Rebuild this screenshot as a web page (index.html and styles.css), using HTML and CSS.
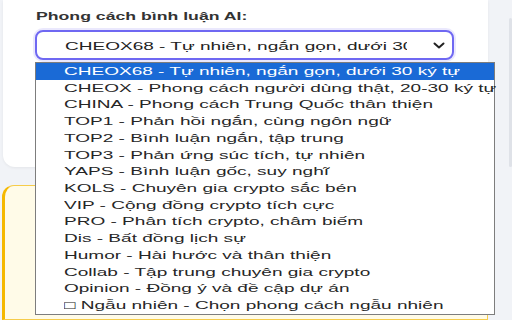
FILE: index.html
```html
<!DOCTYPE html>
<html lang="vi">
<head>
<meta charset="utf-8">
<link rel="stylesheet" href="styles.css">
</head>
<body>
<div class="page">
  <div class="main">
    <section class="card">
      <div class="label"><span class="t">Phong cách bình luận AI:</span></div>
      <div class="field">
        <div class="select">
          <div class="value"><span class="t">CHEOX68 - Tự nhiên, ngắn gọn, dưới 30 ký tự</span></div>
          <svg class="chev" width="12" height="7" viewBox="0 0 12 7"><path d="M1.5 1.5 L6 5.5 L10.5 1.5" fill="none" stroke="#222" stroke-width="2" stroke-linecap="round" stroke-linejoin="round"/></svg>
        </div>
        <ul class="list">
          <li class="opt sel"><span class="t">CHEOX68 - Tự nhiên, ngắn gọn, dưới 30 ký tự</span></li>
          <li class="opt"><span class="t">CHEOX - Phong cách người dùng thật, 20-30 ký tự</span></li>
          <li class="opt"><span class="t">CHINA - Phong cách Trung Quốc thân thiện</span></li>
          <li class="opt"><span class="t">TOP1 - Phản hồi ngắn, cùng ngôn ngữ</span></li>
          <li class="opt"><span class="t">TOP2 - Bình luận ngắn, tập trung</span></li>
          <li class="opt"><span class="t">TOP3 - Phản ứng súc tích, tự nhiên</span></li>
          <li class="opt"><span class="t">YAPS - Bình luận gốc, suy nghĩ</span></li>
          <li class="opt"><span class="t">KOLS - Chuyên gia crypto sắc bén</span></li>
          <li class="opt"><span class="t">VIP - Cộng đồng crypto tích cực</span></li>
          <li class="opt"><span class="t">PRO - Phân tích crypto, châm biếm</span></li>
          <li class="opt"><span class="t">Dis - Bất đồng lịch sự</span></li>
          <li class="opt"><span class="t">Humor - Hài hước và thân thiện</span></li>
          <li class="opt"><span class="t">Collab - Tập trung chuyên gia crypto</span></li>
          <li class="opt"><span class="t">Opinion - Đồng ý và đề cập dự án</span></li>
          <li class="opt"><span class="t">□ Ngẫu nhiên - Chọn phong cách ngẫu nhiên</span></li>
        </ul>
      </div>
    </section>
    <section class="note"></section>
  </div>
  <div class="scroll"><div class="thumb"></div></div>
</div>
</body>
</html>
```
FILE: styles.css
```css
* { box-sizing: border-box; }
html, body { margin: 0; padding: 0; }
body {
  font-family: "Liberation Sans", Arial, sans-serif;
  background: #f1f3f7;
  color: #333;
}
.page {
  display: flex;
  width: 512px;
  height: 320px;
  overflow: hidden;
}
.main {
  width: 485px;
  margin-left: 3px;
  display: flex;
  flex-direction: column;
}
.t {
  display: inline-block;
  white-space: nowrap;
  transform: scaleX(1.7);
  transform-origin: 0 50%;
}
.card {
  background: #fff;
  height: 172px;
  border-radius: 0 0 12px 12px;
  box-shadow: 0 1px 3px rgba(0,0,0,0.06);
  padding: 10px 0 0 33px;
}
.label {
  font-size: 10.4px;
  font-weight: 700;
  line-height: 14px;
  color: #333;
  margin-bottom: 6px;
}
.field {
  position: relative;
  margin-left: -1px;
}
.select {
  width: 419px;
  height: 30px;
  border: 2px solid #6f68f2;
  border-radius: 8px;
  box-shadow: 0 0 0 2px rgba(111,104,242,0.15);
  display: flex;
  align-items: center;
  padding-left: 28px;
  padding-right: 5px;
  background: #fff;
}
.value {
  width: 342px;
  overflow: hidden;
  font-size: 11.2px;
  line-height: 14px;
  color: #222;
  padding-top: 1px;
}
.chev {
  margin-left: auto;
  margin-right: 2px;
}
.list {
  position: absolute;
  top: 32px;
  left: 0;
  width: 460px;
  height: 253px;
  margin: 0;
  padding: 0;
  list-style: none;
  background: #fff;
  border: 1px solid #7d7d7d;
  z-index: 5;
}
.opt {
  height: 16.73px;
  line-height: 16.73px;
  font-size: 11.2px;
  color: #262626;
  padding-left: 28px;
}
.opt.sel {
  background: #1a6ad6;
  color: #fff;
}
.note {
  margin-top: 18px;
  margin-left: -1px;
  height: 140px;
  background: #fffbe8;
  border: 1px solid #f6cc4a;
  border-left: 3px solid #f5b800;
  border-radius: 12px 12px 0 0;
}
.scroll {
  flex: 1;
  display: flex;
  justify-content: flex-end;
  padding-top: 18px;
}
.thumb {
  width: 3px;
  height: 149px;
  background: #dfe2e8;
  border-radius: 2px;
}
```
